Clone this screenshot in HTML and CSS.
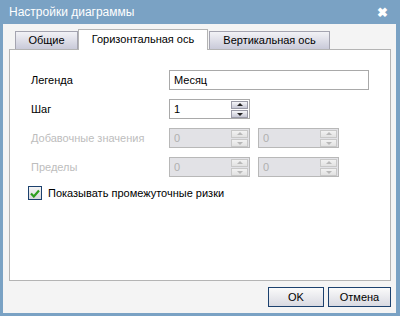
FILE: index.html
```html
<!DOCTYPE html>
<html lang="ru">
<head>
    <meta charset="UTF-8">
    <title>Настройки диаграммы</title>
    <link rel="stylesheet" href="styles.css">
</head>
<body>
    <div class="dialog">
        <div class="title-bar">
            <span class="title">Настройки диаграммы</span>
            <span class="close">&#x2716;</span>
        </div>
        <div class="dialog-body">
            <div class="tabs">
                <div class="tab tab-common">Общие</div>
                <div class="tab tab-horizontal active">Горизонтальная ось</div>
                <div class="tab tab-vertical">Вертикальная ось</div>
            </div>
            <div class="panel">
                <div class="row">
                    <label class="label">Легенда</label>
                    <input class="text-input" type="text" value="Месяц">
                </div>
                <div class="row">
                    <label class="label">Шаг</label>
                    <div class="spinner">
                        <input type="text" value="1">
                        <div class="spin-btns">
                            <span class="spin up"></span>
                            <span class="spin down"></span>
                        </div>
                    </div>
                </div>
                <div class="row disabled">
                    <label class="label">Добавочные значения</label>
                    <div class="spinner">
                        <input type="text" value="0" disabled>
                        <div class="spin-btns">
                            <span class="spin up"></span>
                            <span class="spin down"></span>
                        </div>
                    </div>
                    <div class="spinner">
                        <input type="text" value="0" disabled>
                        <div class="spin-btns">
                            <span class="spin up"></span>
                            <span class="spin down"></span>
                        </div>
                    </div>
                </div>
                <div class="row disabled">
                    <label class="label">Пределы</label>
                    <div class="spinner">
                        <input type="text" value="0" disabled>
                        <div class="spin-btns">
                            <span class="spin up"></span>
                            <span class="spin down"></span>
                        </div>
                    </div>
                    <div class="spinner">
                        <input type="text" value="0" disabled>
                        <div class="spin-btns">
                            <span class="spin up"></span>
                            <span class="spin down"></span>
                        </div>
                    </div>
                </div>
                <div class="check-row">
                    <span class="checkbox">
                        <svg width="10" height="9" viewBox="0 0 10 9"><path d="M1 4.5 L3.8 7.5 L9 1.5" fill="none" stroke="#2e9e1e" stroke-width="2.2"/></svg>
                    </span>
                    <span>Показывать промежуточные ризки</span>
                </div>
            </div>
            <div class="buttons">
                <button class="btn ok">OK</button>
                <button class="btn">Отмена</button>
            </div>
        </div>
    </div>
</body>
</html>
```

FILE: styles.css
```css
body {
    margin: 0;
    padding: 0;
    font-family: "Liberation Sans", Arial, sans-serif;
    font-size: 11px;
    color: #000;
}

.dialog {
    width: 400px;
    height: 316px;
    box-sizing: border-box;
    background-color: #7aa2c4;
    padding: 0 4px 3px 3px;
    display: flex;
    flex-direction: column;
}

.title-bar {
    height: 24px;
    display: flex;
    justify-content: space-between;
    align-items: center;
    color: white;
    padding: 0 8px 0 6px;
}

.title-bar .title {
    font-size: 12px;
}

.title-bar .close {
    font-size: 13px;
    font-weight: bold;
}

.dialog-body {
    flex: 1;
    background-color: #f4f4f4;
    padding: 5px 5px 6px 6px;
    display: flex;
    flex-direction: column;
}

.tabs {
    display: flex;
    align-items: flex-end;
    padding-left: 6px;
    height: 20px;
}

.tab {
    height: 18px;
    box-sizing: border-box;
    border: 1px solid #a4a4b0;
    border-bottom: none;
    background: linear-gradient(#f2f2f6, #c9cad9);
    text-align: center;
    line-height: 17px;
}

.tab-common {
    width: 63px;
}

.tab-horizontal {
    width: 130px;
}

.tab-vertical {
    width: 121px;
    margin-left: 1px;
}

.tab.active {
    height: 21px;
    background: #fff;
    border-color: #b4b4b4;
    line-height: 19px;
    position: relative;
    top: 1px;
}

.panel {
    flex: 1;
    background: #fff;
    border: 1px solid #b4b4b4;
    padding: 20px 0 0 21px;
}

.row {
    display: flex;
    align-items: center;
    height: 20px;
    margin-bottom: 9px;
}

.label {
    width: 138px;
}

.text-input {
    width: 200px;
    height: 20px;
    box-sizing: border-box;
    border: 1px solid #a9a9a9;
    padding: 0 4px;
    font: inherit;
}

.spinner {
    width: 81px;
    height: 20px;
    box-sizing: border-box;
    border: 1px solid #a9a9a9;
    display: flex;
    align-items: center;
    margin-right: 8px;
    background: #fff;
}

.spinner input {
    flex: 1;
    min-width: 0;
    border: none;
    padding: 0 4px;
    font: inherit;
    background: transparent;
    color: #000;
}

.spin-btns {
    display: flex;
    flex-direction: column;
    gap: 1px;
    margin-right: 1px;
}

.spin {
    width: 17px;
    height: 8px;
    box-sizing: border-box;
    border: 1px solid #9a9aa6;
    background: linear-gradient(#f6f6f8, #c6c7d4);
    position: relative;
}

.spin::after {
    content: "";
    position: absolute;
    left: 5px;
    border-left: 3px solid transparent;
    border-right: 3px solid transparent;
}

.spin.up::after {
    top: 1px;
    border-bottom: 3px solid #222;
}

.spin.down::after {
    top: 2px;
    border-top: 3px solid #222;
}

.row.disabled .label {
    color: #bdbdbd;
}

.row.disabled .spinner {
    background: #e2e2e6;
    border-color: #b8b8b8;
}

.row.disabled .spinner input {
    color: #b0b0b0;
}

.row.disabled .spin {
    border-color: #c8c8c8;
    background: linear-gradient(#f2f2f2, #e2e2e2);
}

.row.disabled .spin.up::after {
    border-bottom-color: #b8b8b8;
}

.row.disabled .spin.down::after {
    border-top-color: #b8b8b8;
}

.check-row {
    display: flex;
    align-items: center;
    gap: 6px;
    margin-left: -3px;
}

.checkbox {
    width: 14px;
    height: 14px;
    box-sizing: border-box;
    border: 1px solid #1c416e;
    background: linear-gradient(#f4f4f4, #d8d8dc);
    display: flex;
    align-items: center;
    justify-content: center;
}

.buttons {
    display: flex;
    justify-content: flex-end;
    gap: 4px;
    margin-top: 6px;
}

.btn {
    height: 20px;
    border: 1px solid #1c416e;
    background: linear-gradient(#fafafa, #d9dae2);
    font: inherit;
    padding: 0;
    width: 56px;
}

.btn:last-child {
    width: 63px;
}
```
